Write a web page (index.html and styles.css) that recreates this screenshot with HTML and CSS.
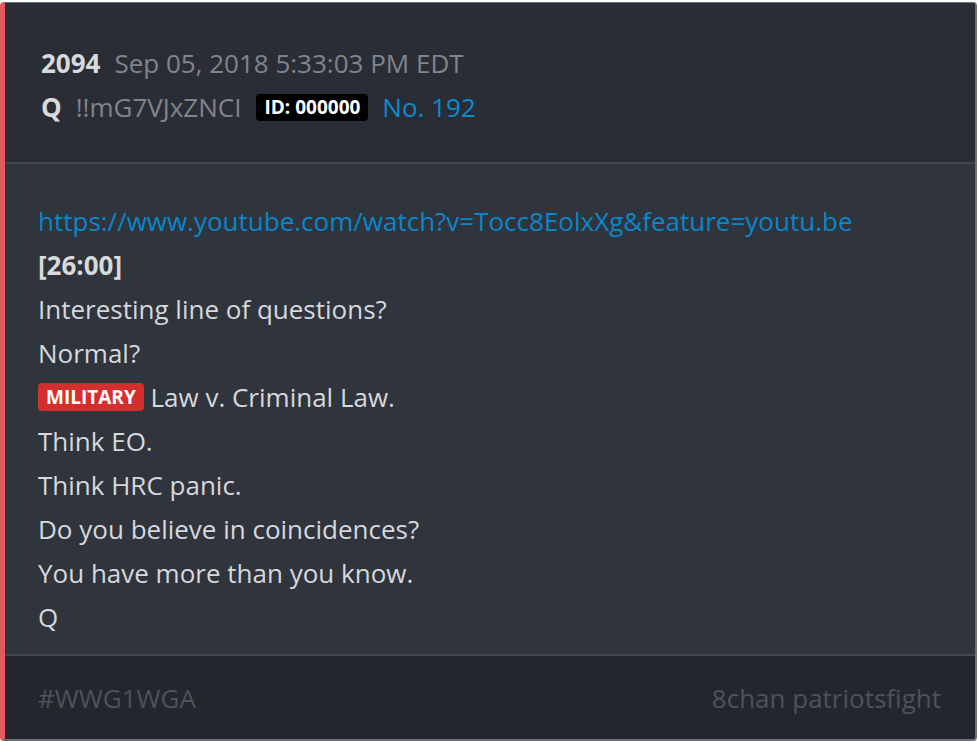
FILE: index.html
```html
<!DOCTYPE html>
<html>
<head>
<meta charset="utf-8">
<link rel="stylesheet" href="styles.css">
</head>
<body>
<div class="card">
  <div class="head">
    <div class="line"><span class="num">2094</span><span class="date">Sep 05, 2018 5:33:03 PM EDT</span></div>
    <div class="line"><span class="num">Q</span><span class="trip">!!mG7VJxZNCI</span><span class="id">ID: 000000</span><span class="no">No. 192</span></div>
  </div>
  <div class="body">
    <div class="line"><a class="link" href="#">https://www.youtube.com/watch?v=Tocc8EolxXg&amp;feature=youtu.be</a></div>
    <div class="line"><b>[26:00]</b></div>
    <div class="line">Interesting line of questions?</div>
    <div class="line">Normal?</div>
    <div class="line"><span class="tag">MILITARY</span> Law v. Criminal Law.</div>
    <div class="line">Think EO.</div>
    <div class="line">Think HRC panic.</div>
    <div class="line">Do you believe in coincidences?</div>
    <div class="line">You have more than you know.</div>
    <div class="line">Q</div>
  </div>
  <div class="foot">
    <span>#WWG1WGA</span>
    <span>8chan patriotsfight</span>
  </div>
</div>
</body>
</html>
```
FILE: styles.css
```css
html, body {
  margin: 0;
  padding: 0;
  background: #ffffff;
}
body {
  padding-top: 2px;
  font-family: "Open Sans", sans-serif;
  font-size: 26px;
}
.card {
  width: 970px;
  height: 736px;
  border-left: 5px solid #e05a5e;
  border-top: 1px solid #6b6f78;
  border-right: 2px solid #6b6f78;
  border-bottom: 2px solid #6b6f78;
  border-radius: 4px;
  display: flex;
  flex-direction: column;
  overflow: hidden;
  background: #2f343d;
}
.line {
  line-height: 44px;
  height: 44px;
  white-space: nowrap;
}
.head {
  background: #2a2d35;
  padding: 38px 0 33px 36px;
  border-bottom: 2px solid #42464f;
}
.num {
  font-weight: 700;
  color: #d9dadc;
  margin-right: 14px;
}
.date, .trip {
  color: #80848d;
}
.trip {
  margin-right: 15px;
}
.id {
  display: inline-block;
  background: #000;
  color: #fff;
  font-weight: 700;
  font-size: 19px;
  line-height: 27px;
  padding: 0 8px;
  border-radius: 4px;
  vertical-align: 3px;
  margin-right: 14px;
}
.no {
  color: #0a8bd0;
}
.body {
  flex: 1;
  padding: 35px 0 0 33px;
  color: #d6d8dc;
}
.link {
  color: #0a87c8;
  text-decoration: none;
}
.body b {
  color: #d9dadc;
}
.tag {
  display: inline-block;
  background: #d32f2f;
  color: #fff;
  font-weight: 700;
  font-size: 19px;
  line-height: 28px;
  padding: 0 8px;
  border-radius: 4px;
  vertical-align: 3px;
}
.foot {
  height: 83px;
  background: #23262d;
  border-top: 2px solid #42464f;
  display: flex;
  justify-content: space-between;
  align-items: center;
  padding: 0 34px 0 33px;
  color: #4e525b;
}
```
